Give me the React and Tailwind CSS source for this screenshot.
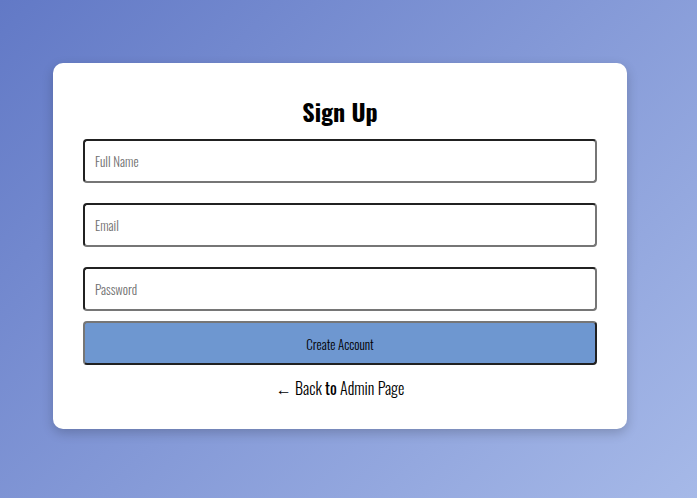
export default function App() {
  const inputCls =
    "h-[44px] w-full border-2 [border-style:inset] border-[#767676] rounded-[4px] px-[10px] text-[13px] font-light placeholder:text-[#6f6f6f] outline-none bg-white";
  return (
    <div className="w-[697px] h-[498px] overflow-hidden bg-[linear-gradient(135deg,#6279c6_0%,#a6b9e8_100%)] pl-[53px] pt-[63px] font-['Oswald','Liberation_Sans_Narrow',sans-serif]">
      <div className="w-[574px] h-[366px] bg-white rounded-[10px] shadow-[0_4px_12px_rgba(0,0,0,0.2)] px-[30px] pt-[29px] flex flex-col">
        <h1 className="text-[24px] font-bold text-black text-center leading-[38px] mb-[9px]">Sign Up</h1>
        <div className="flex flex-col gap-[20px]">
          <input placeholder="Full Name" className={inputCls} />
          <input placeholder="Email" className={inputCls} />
          <input placeholder="Password" type="password" className={inputCls} />
        </div>
        <button className="mt-[10px] h-[44px] w-full pt-[4px] bg-[#6e97d0] border-2 [border-style:outset] border-[#767676] rounded-[4px] text-[13px] font-light text-black">
          Create Account
        </button>
        <div className="mt-[11px] text-center text-[16px] font-light text-black leading-[24px]">
          ← Back <span className="font-normal">to</span> Admin Page
        </div>
      </div>
    </div>
  );
}
